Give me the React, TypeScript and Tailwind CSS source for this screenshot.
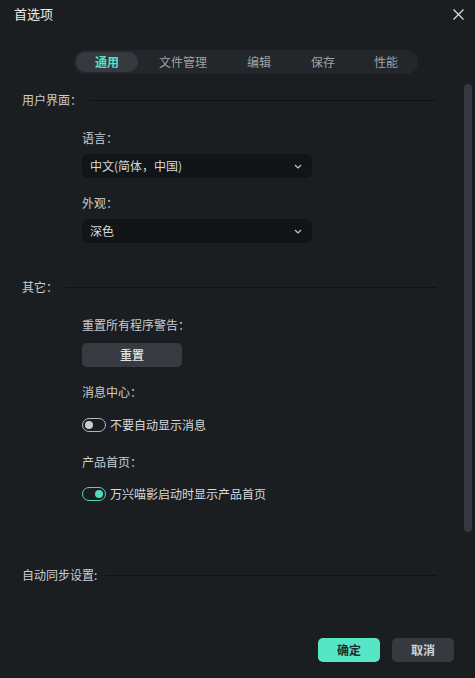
import React from "react";

const font = "font-['Noto_Sans_CJK_SC','Noto_Sans',sans-serif]";

const tabs = [
    { label: "通用", w: "w-[62px]", active: true },
    { label: "文件管理", w: "w-[90px]", active: false },
    { label: "编辑", w: "w-[62px]", active: false },
    { label: "保存", w: "w-[66px]", active: false },
    { label: "性能", w: "w-[60px]", active: false },
];

const SectionHeader = ({ label, className }: { label: string; className: string }) => (
    <div className={`flex items-center pl-[22px] ${className}`}>
        <span className="text-[12px] leading-[16px] text-[#c9cdd1] whitespace-nowrap">{label}</span>
        <div className="flex-1 h-px bg-[#0f1113] ml-[8px]" />
    </div>
);

const Chevron = () => (
    <svg width="8" height="5" viewBox="0 0 8 5" fill="none">
        <path d="M1 1l3 3 3-3" stroke="#c4c7cb" strokeWidth="1.2" />
    </svg>
);

const Select = ({ value }: { value: string }) => (
    <div className="w-[230px] h-[24px] rounded-[6px] bg-[#121518] flex items-center justify-between pl-[8px] pr-[10px]">
        <span className="text-[12px] leading-[16px] text-[#d6d9dd]">{value}</span>
        <Chevron />
    </div>
);

const Toggle = ({ on }: { on: boolean }) => (
    <div
        className={`w-[24px] h-[14px] rounded-full border-[1.5px] flex items-center px-[2px] ${
            on ? "border-[#4fd9bd] justify-end" : "border-[#b4b8bc] justify-start"
        }`}
    >
        <div className={`w-[8px] h-[8px] rounded-full ${on ? "bg-[#4fd9bd]" : "bg-[#c9ccd0]"}`} />
    </div>
);

const Label = ({ text, className }: { text: string; className: string }) => (
    <div className={`pl-[82px] text-[12px] leading-[16px] text-[#c9cdd1] ${className}`}>{text}</div>
);

export default function App() {
    return (
        <div className={`w-[475px] h-[678px] bg-[#1b1e21] flex flex-col overflow-hidden ${font}`}>
            {/* Header */}
            <div className="h-[28px] flex items-center justify-between pl-[14px] pr-[11px]">
                <span className="text-[13px] leading-[16px] text-[#eceef0]">首选项</span>
                <svg width="11" height="11" viewBox="0 0 11 11" fill="none">
                    <path d="M0.5 0.5l10 10M10.5 0.5l-10 10" stroke="#d8dadc" strokeWidth="1.3" />
                </svg>
            </div>

            {/* Tabs */}
            <div className="mt-[22px] ml-[74px] w-[344px] h-[24px] rounded-full bg-[#23262a] flex items-center px-[2px]">
                {tabs.map((t) => (
                    <div
                        key={t.label}
                        className={`${t.w} h-[20px] rounded-full flex items-center justify-center text-[12px] leading-[16px] ${
                            t.active ? "bg-[#363a40] text-[#55e3c5] font-bold" : "text-[#9ea3a8]"
                        }`}
                    >
                        {t.label}
                    </div>
                ))}
            </div>

            {/* Body */}
            <div className="flex flex-1 min-h-0">
                <div className="flex-1 flex flex-col pr-[28px]">
                    <SectionHeader label="用户界面：" className="mt-[18px]" />

                    <Label text="语言：" className="mt-[22px]" />
                    <div className="pl-[82px] mt-[8px]">
                        <Select value="中文(简体，中国)" />
                    </div>

                    <Label text="外观：" className="mt-[17px]" />
                    <div className="pl-[82px] mt-[8px]">
                        <Select value="深色" />
                    </div>

                    <SectionHeader label="其它：" className="mt-[36px]" />

                    <Label text="重置所有程序警告：" className="mt-[22px]" />
                    <div className="pl-[82px] mt-[8px]">
                        <button className="w-[100px] h-[24px] rounded-[5px] bg-[#373b41] text-[12px] leading-[16px] font-medium text-[#e2e4e6]">
                            重置
                        </button>
                    </div>

                    <Label text="消息中心：" className="mt-[17px]" />
                    <div className="pl-[82px] mt-[17px] flex items-center gap-[4px] h-[16px]">
                        <Toggle on={false} />
                        <span className="text-[12px] leading-[16px] text-[#d6d9dd]">不要自动显示消息</span>
                    </div>

                    <Label text="产品首页：" className="mt-[21px]" />
                    <div className="pl-[82px] mt-[16px] flex items-center gap-[4px] h-[16px]">
                        <Toggle on={true} />
                        <span className="text-[12px] leading-[16px] text-[#d6d9dd]">万兴喵影启动时显示产品首页</span>
                    </div>

                    <SectionHeader label="自动同步设置:" className="mt-[65px]" />
                </div>

                {/* Scrollbar */}
                <div className="w-[8px] h-[448px] mt-[10px] mr-[3px] rounded-full bg-[#343840]" />
            </div>

            {/* Footer */}
            <div className="flex justify-end gap-[12px] pr-[21px] pb-[16px]">
                <button className="w-[62px] h-[24px] rounded-[5px] bg-[#55e6c6] text-[12px] leading-[16px] font-bold text-[#1d2b29]">
                    确定
                </button>
                <button className="w-[62px] h-[24px] rounded-[5px] bg-[#363a40] text-[12px] leading-[16px] font-bold text-[#d0d4d8]">
                    取消
                </button>
            </div>
        </div>
    );
}
